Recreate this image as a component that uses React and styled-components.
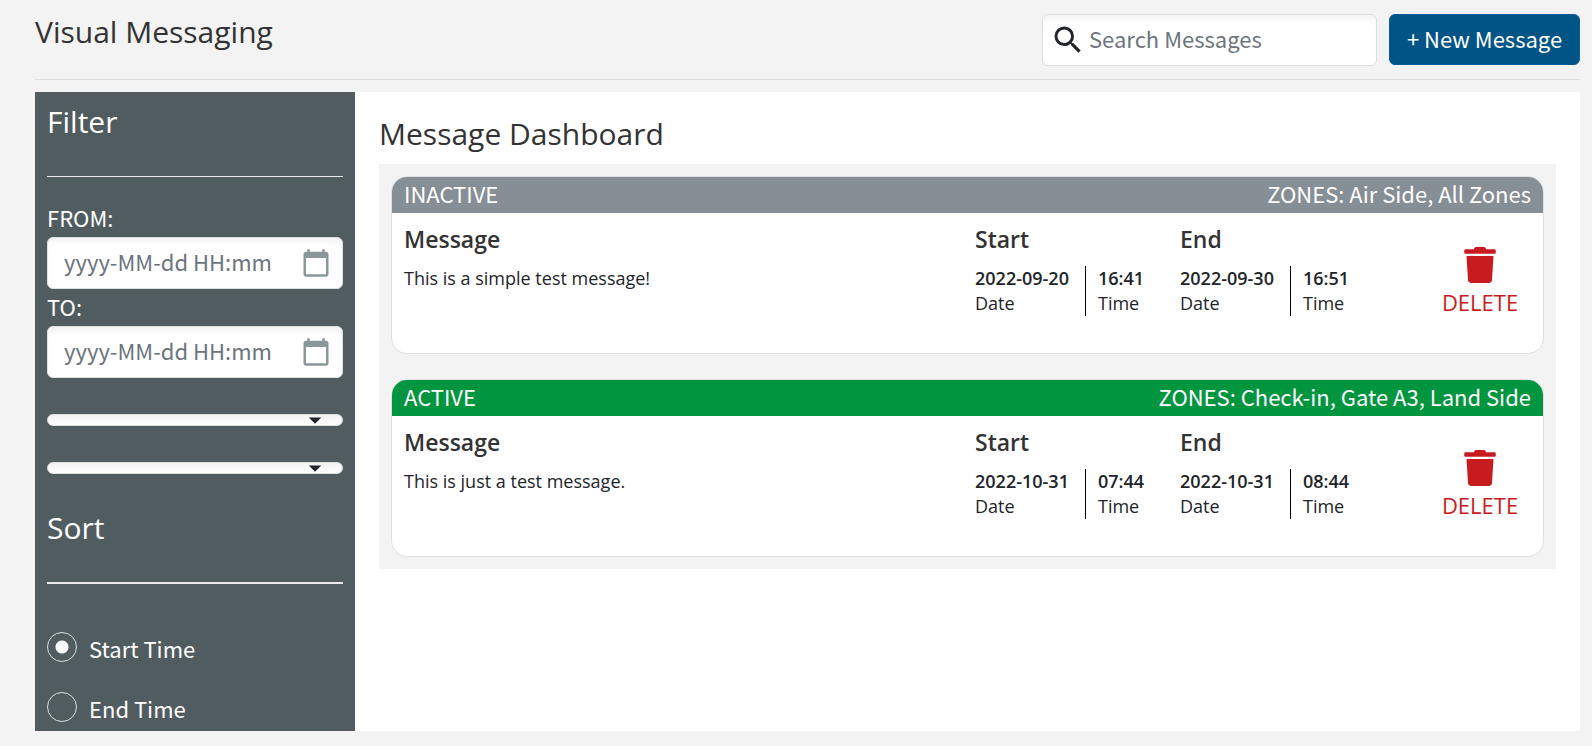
import React from "react";
import styled, { createGlobalStyle } from "styled-components";
import { MdSearch, MdCalendarToday, MdArrowDropDown } from "react-icons/md";
import { FaTrash } from "react-icons/fa";

const sans = `"Noto Sans CJK SC", "Liberation Sans", sans-serif`;
const display = `"Open Sans", "Liberation Sans", sans-serif`;

const GlobalStyle = createGlobalStyle`
  *, *::before, *::after { box-sizing: border-box; }
  body {
    margin: 0;
    background: #f3f3f3;
    color: #212529;
    font-family: ${sans};
    font-size: 22px;
  }
  input, select, button { font: inherit; color: inherit; margin: 0; }
`;

const Page = styled.div`
  padding: 0 12px 12px 35px;
`;

const TopBar = styled.header`
  display: flex;
  align-items: flex-start;
  gap: 12px;
  padding: 14px 0 13px;
  margin-bottom: 12px;
  border-bottom: 1px solid #dcdfdf;
`;

const Heading = styled.h2`
  margin: 0;
  font-family: ${display};
  font-size: 30px;
  font-weight: 400;
  line-height: 36px;
  color: ${(p) => (p.$light ? "#fff" : "#333")};
`;

const PageTitle = styled(Heading)`
  flex: 1;
`;

const Field = styled.label`
  display: flex;
  align-items: center;
  height: 52px;
  background: #fff;
  border: 1px solid #dadfe0;
  border-radius: 6px;
  box-shadow: inset 0 6px 6px -2px rgba(0, 0, 0, 0.05);
`;

const SearchField = styled(Field)`
  width: 335px;
  padding: 0 7px;
  gap: 3px;
`;

const DateField = styled(Field)`
  padding: 0 11px 0 16px;
  color: #8a9799;
`;

const TextInput = styled.input`
  flex: 1;
  width: 100%;
  min-width: 0;
  height: 50px;
  padding: 0 0 4px;
  border: 0;
  outline: 0;
  background: transparent;
  color: #212529;
  &::placeholder { color: #6c757d; opacity: 1; }
`;

const PrimaryButton = styled.button`
  width: 191px;
  height: 51px;
  padding: 0 0 4px;
  border: 1px solid #0b5aa0;
  border-radius: 6px;
  background: #005486;
  color: #fff;
  white-space: nowrap;
`;

const Panel = styled.div`
  display: flex;
  background: #fff;
`;

const Sidebar = styled.aside`
  flex: 0 0 320px;
  min-width: 0;
  padding: 12px 12px 9px;
  background: #515c61;
  color: #fff;
`;

const Rule = styled.hr`
  height: ${(p) => (p.$thick ? 2 : 1)}px;
  margin: 36px 0 ${(p) => (p.$thick ? 48 : 23)}px;
  border: 0;
  background: #ebebee;
`;

const FieldLabel = styled.label`
  display: block;
  padding-bottom: 3px;
  line-height: 34px;
`;

const SelectBox = styled.div`
  display: grid;
  align-items: center;
  margin: 36px 0;
  color: #212529;
  > * { grid-area: 1 / 1; }
  > svg {
    justify-self: end;
    margin: -9px 13px -9px 0;
    pointer-events: none;
  }
`;

const Select = styled.select`
  appearance: none;
  width: 100%;
  height: 12px;
  padding: 0;
  border: 1px solid #dadfe0;
  border-radius: 6px;
  background: linear-gradient(#f3f3f3, #fff);
`;

const SortOptions = styled.div`
  display: grid;
  gap: 30px;
`;

const Option = styled.label`
  display: flex;
  align-items: flex-end;
  gap: 12px;
  line-height: 28px;
`;

const Radio = styled.input`
  appearance: none;
  width: 30px;
  height: 30px;
  border: 1px solid #dadfe0;
  border-radius: 50%;
  &:checked { background: radial-gradient(circle, #fafafa 0 6px, transparent 7px); }
`;

const Main = styled.main`
  flex: 1;
  min-width: 0;
  padding: 24px;
`;

const CardList = styled.div`
  display: grid;
  gap: 25px;
  margin-top: 12px;
  padding: 12px;
  background: #f3f3f3;
`;

const Card = styled.article`
  overflow: hidden;
  background: #fff;
  border: 1px solid #dee0e3;
  border-radius: 16px;
`;

const CardHeader = styled.header`
  display: flex;
  justify-content: space-between;
  padding: 0 12px 4px;
  line-height: 32px;
  color: #fff;
  background: ${(p) => (p.$active ? "#009640" : "#868e96")};
`;

const CardBody = styled.div`
  display: grid;
  grid-template-columns: 1fr 205px 205px 146px;
  min-height: 140px;
  padding: 12px;
`;

const CardTitle = styled.h3`
  margin: 0 0 13px;
  font-family: ${display};
  font-size: 23px;
  font-weight: 600;
  line-height: 28px;
  color: #333;
`;

const Copy = styled.p`
  margin: 0;
  font-family: ${display};
  font-size: 18px;
  font-weight: 400;
  line-height: 25px;
`;

const Stamp = styled.div`
  display: grid;
  grid-template-columns: 111px 1fr;
`;

const StampPart = styled(Copy).attrs({ as: "div" })`
  padding-left: ${(p) => (p.$divided ? 12 : 0)}px;
  border-right: ${(p) => (p.$divided ? "0" : "1px solid #000")};
`;

const Value = styled.div`
  font-weight: 600;
`;

const DeleteButton = styled.button`
  display: flex;
  flex-direction: column;
  align-items: center;
  justify-self: end;
  align-self: start;
  gap: 5px;
  width: 102px;
  margin-top: 22px;
  padding: 0;
  border: 0;
  background: none;
  color: #c81b20;
  font-family: ${display};
  font-weight: 400;
  line-height: 28px;
`;

const messages = [
  {
    status: "INACTIVE",
    zones: "Air Side, All Zones",
    text: "This is a simple test message!",
    start: ["2022-09-20", "16:41"],
    end: ["2022-09-30", "16:51"],
  },
  {
    status: "ACTIVE",
    zones: "Check-in, Gate A3, Land Side",
    text: "This is just a test message.",
    start: ["2022-10-31", "07:44"],
    end: ["2022-10-31", "08:44"],
  },
];

function DateInput({ id, label }) {
  return (
    <>
      <FieldLabel htmlFor={id}>{label}</FieldLabel>
      <DateField htmlFor={id}>
        <TextInput id={id} placeholder="yyyy-MM-dd HH:mm" />
        <MdCalendarToday size={30} />
      </DateField>
    </>
  );
}

function Dropdown({ label }) {
  return (
    <SelectBox>
      <Select aria-label={label} />
      <MdArrowDropDown size={30} />
    </SelectBox>
  );
}

function DateTime({ title, value }) {
  return (
    <div>
      <CardTitle>{title}</CardTitle>
      <Stamp>
        <StampPart>
          <Value>{value[0]}</Value>
          Date
        </StampPart>
        <StampPart $divided>
          <Value>{value[1]}</Value>
          Time
        </StampPart>
      </Stamp>
    </div>
  );
}

function MessageCard({ message }) {
  return (
    <Card>
      <CardHeader $active={message.status === "ACTIVE"}>
        <span>{message.status}</span>
        <span>ZONES: {message.zones}</span>
      </CardHeader>
      <CardBody>
        <div>
          <CardTitle>Message</CardTitle>
          <Copy>{message.text}</Copy>
        </div>
        <DateTime title="Start" value={message.start} />
        <DateTime title="End" value={message.end} />
        <DeleteButton type="button">
          <FaTrash size={36} />
          DELETE
        </DeleteButton>
      </CardBody>
    </Card>
  );
}

export default function App() {
  return (
    <Page>
      <GlobalStyle />
      <TopBar>
        <PageTitle as="h1">Visual Messaging</PageTitle>
        <SearchField>
          <MdSearch size={36} />
          <TextInput type="text" aria-label="Search Messages" placeholder="Search Messages" />
        </SearchField>
        <PrimaryButton type="button">+ New Message</PrimaryButton>
      </TopBar>
      <Panel>
        <Sidebar>
          <Heading $light>Filter</Heading>
          <Rule />
          <DateInput id="from" label="FROM:" />
          <DateInput id="to" label="TO:" />
          <Dropdown label="Zone" />
          <Dropdown label="Status" />
          <Heading $light>Sort</Heading>
          <Rule $thick />
          <SortOptions>
            <Option>
              <Radio type="radio" name="sort" defaultChecked />
              Start Time
            </Option>
            <Option>
              <Radio type="radio" name="sort" />
              End Time
            </Option>
          </SortOptions>
        </Sidebar>
        <Main>
          <Heading>Message Dashboard</Heading>
          <CardList>
            {messages.map((m) => (
              <MessageCard key={m.status} message={m} />
            ))}
          </CardList>
        </Main>
      </Panel>
    </Page>
  );
}
